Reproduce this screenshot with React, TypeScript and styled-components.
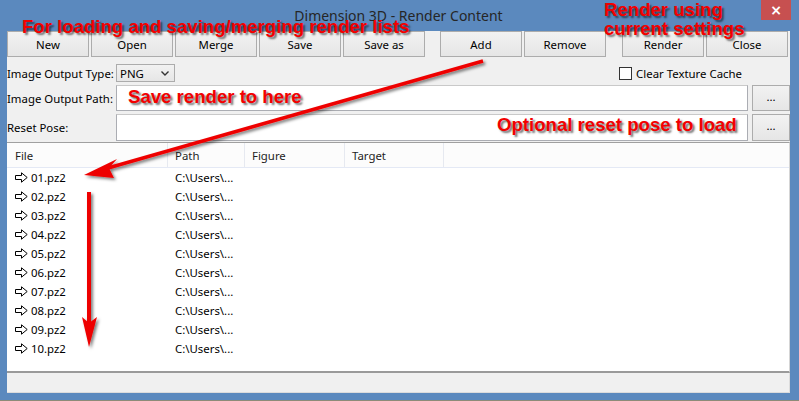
import React from 'react';
import styled, {createGlobalStyle} from "styled-components";

const GlobalStyle = createGlobalStyle`
  html, body {
    margin: 0;
    padding: 0;
    background: #ffffff;
  }
  * {
    box-sizing: border-box;
  }
`

const uiFont = `"Noto Sans", "Open Sans", sans-serif`

const Frame = styled.div`
  position: relative;
  width: 799px;
  height: 401px;
  background: #5b89be;
  border-bottom: 1px solid #8d8b78;
  padding: 0 9px 7px 7px;
  display: flex;
  flex-direction: column;
  font-family: ${uiFont};
  font-size: 11.4px;
  color: #000;
  overflow: hidden;
`

const TitleBar = styled.div`
  height: 31px;
  display: grid;
  grid-template-columns: 1fr auto 1fr;
  align-items: start;
`

const Title = styled.div`
  grid-column: 2;
  padding-top: 6px;
  font-size: 14px;
  color: #262626;
`

const CloseButton = styled.div`
  grid-column: 3;
  justify-self: end;
  margin-right: -1px;
  width: 30px;
  height: 20px;
  background: #c75050;
  color: #fff;
  font-family: "DejaVu Sans", sans-serif;
  font-weight: bold;
  font-size: 14px;
  line-height: 20px;
  text-align: center;
`

const Client = styled.div`
  flex: 1;
  background: #f0f0f0;
  display: flex;
  flex-direction: column;
`

const Toolbar = styled.div`
  height: 26px;
  display: flex;
`

const ButtonGroup = styled.div<{ $offset?: number }>`
  display: flex;
  gap: 2px;
  margin-left: ${p => p.$offset ?? 0}px;
`

const Button = styled.div<{ $width?: number }>`
  width: ${p => p.$width ?? 82}px;
  height: 26px;
  border: 1px solid #acacac;
  background: linear-gradient(#f2f2f2, #e6e6e6);
  display: flex;
  align-items: center;
  justify-content: center;
`

const OptionsRow = styled.div`
  margin-top: 5px;
  height: 22px;
  display: flex;
  align-items: center;
`

const Label = styled.div`
  width: 109px;
  white-space: nowrap;
`

const Select = styled.div`
  width: 59px;
  height: 18px;
  border: 1px solid #acacac;
  background: linear-gradient(#f2f2f2, #e6e6e6);
  display: flex;
  align-items: center;
  justify-content: space-between;
  padding: 0 5px 0 3px;
`

const CheckWrap = styled.div`
  margin-left: auto;
  margin-right: 48px;
  display: flex;
  align-items: center;
  gap: 4px;
`

const CheckBox = styled.div`
  width: 13px;
  height: 13px;
  border: 1px solid #333;
  background: #fff;
`

const FieldRow = styled.div<{ $top: number, $height: number }>`
  margin-top: ${p => p.$top}px;
  height: ${p => p.$height}px;
  display: flex;
  align-items: center;
`

const TextInput = styled.div`
  flex: 1;
  align-self: stretch;
  background: #fff;
  border: 1px solid #abadb3;
  border-top-color: #c9c9c9;
`

const BrowseButton = styled(Button)`
  margin-left: 4px;
  align-self: stretch;
  height: auto;
  padding-bottom: 4px;
`

const List = styled.div`
  margin-top: 1px;
  flex: 1;
  background: #fff;
  border-top: 1px solid #a0a0a0;
  border-bottom: 2px solid #9a9a9a;
  border-right: 1px solid #d5d5d5;
  display: flex;
  flex-direction: column;
`

const HeaderRow = styled.div`
  height: 25px;
  display: flex;
  background: #fcfcfc;
  border-bottom: 1px solid #e4e9f5;
`

const HeaderCell = styled.div<{ $width: number, $pad?: number }>`
  width: ${p => p.$width}px;
  padding-left: ${p => p.$pad ?? 7}px;
  display: flex;
  align-items: center;
  border-right: 1px solid #e6e9f0;
  color: #1e1e1e;
`

const Row = styled.div`
  height: 19px;
  display: flex;
  align-items: center;
`

const Cell = styled.div<{ $width: number, $pad?: number }>`
  width: ${p => p.$width}px;
  padding-left: ${p => p.$pad ?? 8}px;
  display: flex;
  align-items: center;
  gap: 3px;
  white-space: nowrap;
`

const StatusBar = styled.div`
  height: 20px;
  background: #f0f0f0;
  border-bottom: 1px solid #dcdcdc;
  border-right: 1px solid #dcdcdc;
`

const Note = styled.div<{ $x: number, $y: number }>`
  position: absolute;
  left: ${p => p.$x}px;
  top: ${p => p.$y}px;
  font-family: "Liberation Sans", Arial, sans-serif;
  font-weight: bold;
  font-size: 18.6px;
  line-height: 20px;
  color: #f20000;
  white-space: nowrap;
  text-shadow: 2px 2px 2px rgba(0, 0, 0, 0.55);
`

const StackedNote = styled(Note)`
  line-height: 19px;
`

const Overlay = styled.svg`
  position: absolute;
  left: 0;
  top: 0;
  pointer-events: none;
`

const FileIcon = () => (
  <svg width="13" height="11" viewBox="0 0 13 11">
    <polygon points="0.5,3.5 6.5,3.5 6.5,0.8 12.2,5.5 6.5,10.2 6.5,7.5 0.5,7.5"
             fill="#fff" stroke="#000" strokeWidth="1"/>
  </svg>
)

const files = ["01", "02", "03", "04", "05", "06", "07", "08", "09", "10"]

function App() {
  return (
    <>
      <GlobalStyle/>
      <Frame>
        <TitleBar>
          <Title>Dimension 3D - Render Content</Title>
          <CloseButton>×</CloseButton>
        </TitleBar>
        <Client>
          <Toolbar>
            <ButtonGroup>
              <Button>New</Button>
              <Button>Open</Button>
              <Button>Merge</Button>
              <Button>Save</Button>
              <Button>Save as</Button>
            </ButtonGroup>
            <ButtonGroup $offset={15}>
              <Button>Add</Button>
              <Button>Remove</Button>
            </ButtonGroup>
            <ButtonGroup $offset={16}>
              <Button>Render</Button>
              <Button>Close</Button>
            </ButtonGroup>
          </Toolbar>
          <OptionsRow>
            <Label>Image Output Type:</Label>
            <Select>
              <span>PNG</span>
              <svg width="8" height="5" viewBox="0 0 8 5">
                <polyline points="0.5,0.5 4,4 7.5,0.5" fill="none" stroke="#333" strokeWidth="1.4"/>
              </svg>
            </Select>
            <CheckWrap>
              <CheckBox/>
              <span>Clear Texture Cache</span>
            </CheckWrap>
          </OptionsRow>
          <FieldRow $top={1} $height={26}>
            <Label>Image Output Path:</Label>
            <TextInput/>
            <BrowseButton $width={38}>...</BrowseButton>
          </FieldRow>
          <FieldRow $top={3} $height={27}>
            <Label>Reset Pose:</Label>
            <TextInput/>
            <BrowseButton $width={38}>...</BrowseButton>
          </FieldRow>
          <List>
            <HeaderRow>
              <HeaderCell $width={161} $pad={8}>File</HeaderCell>
              <HeaderCell $width={77}>Path</HeaderCell>
              <HeaderCell $width={100}>Figure</HeaderCell>
              <HeaderCell $width={99}>Target</HeaderCell>
            </HeaderRow>
            {files.map(n => (
              <Row key={n}>
                <Cell $width={161}><FileIcon/>{n}.pz2</Cell>
                <Cell $width={200} $pad={7}>C:\Users\...</Cell>
              </Row>
            ))}
          </List>
          <StatusBar/>
        </Client>

        <Overlay width="799" height="401" viewBox="0 0 799 401">
          <defs>
            <filter id="shade" x="-20%" y="-20%" width="140%" height="140%">
              <feDropShadow dx="2" dy="2" stdDeviation="1.5" floodColor="#000" floodOpacity="0.5"/>
            </filter>
          </defs>
          <g fill="#ee0000" stroke="none" filter="url(#shade)">
            <line x1="483" y1="61" x2="108" y2="168" stroke="#ee0000" strokeWidth="3.5"/>
            <polygon points="84,175 117,159 109,168 114,178"/>
            <line x1="89" y1="192" x2="89" y2="326" stroke="#ee0000" strokeWidth="4"/>
            <polygon points="89,347 82,317 89,323 97,317"/>
          </g>
        </Overlay>
        <Note $x={22} $y={17}>For loading and saving/merging render lists</Note>
        <StackedNote $x={604} $y={0}>Render using<br/>current settings</StackedNote>
        <Note $x={128} $y={87}>Save render to here</Note>
        <Note $x={497} $y={115}>Optional reset pose to load</Note>
      </Frame>
    </>
  );
}

export default App;
